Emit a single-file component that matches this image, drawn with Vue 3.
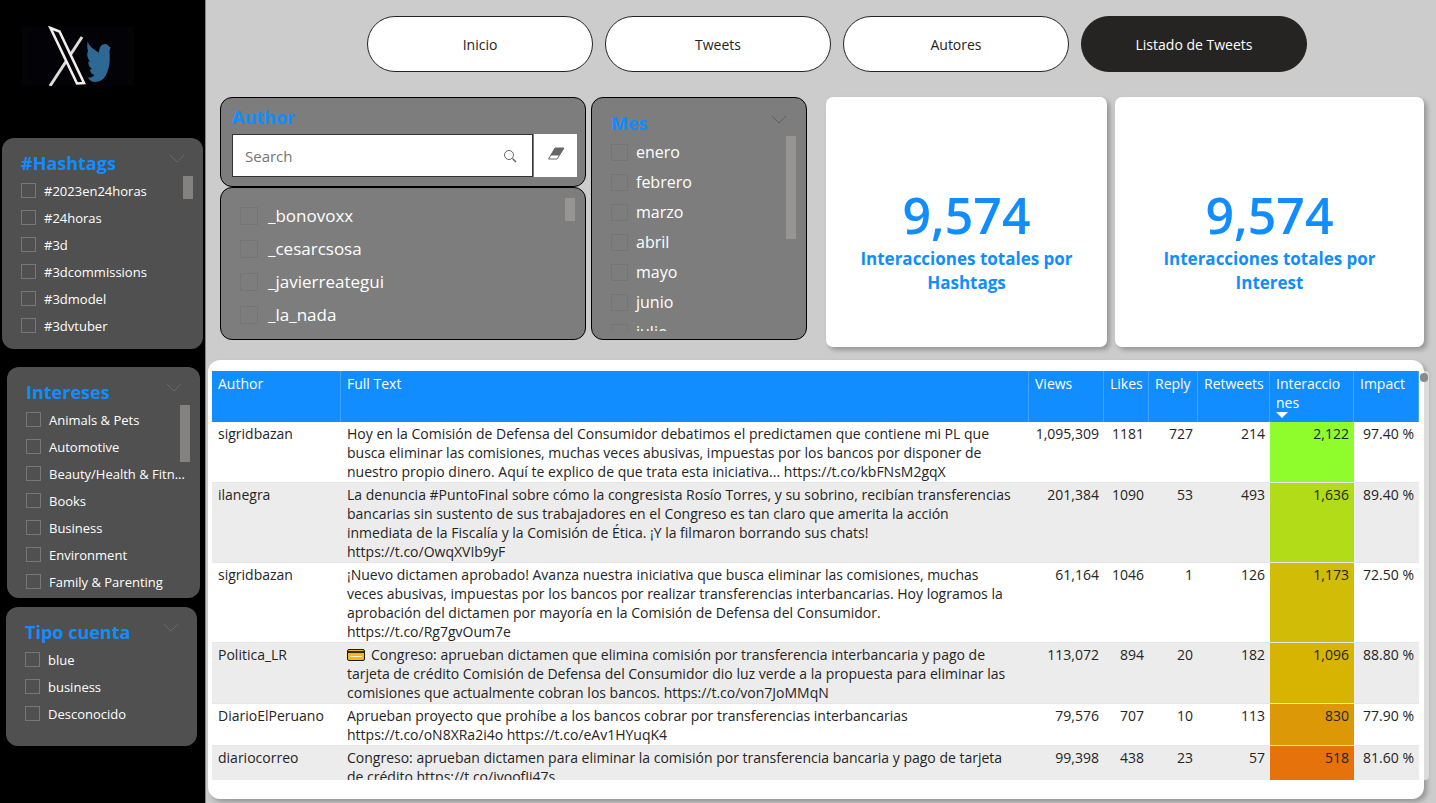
<script setup>
import { ref } from 'vue'

const tabs = ['Inicio', 'Tweets', 'Autores', 'Listado de Tweets']
const activeTab = ref('Listado de Tweets')
const search = ref('')

const sidePanels = [
  {
    id: 'hashtags',
    title: '#Hashtags',
    thumb: 'short',
    items: ['#2023en24horas', '#24horas', '#3d', '#3dcommissions', '#3dmodel', '#3dvtuber'],
  },
  {
    id: 'intereses',
    title: 'Intereses',
    thumb: 'long',
    items: ['Animals & Pets', 'Automotive', 'Beauty/Health & Fitn...', 'Books', 'Business', 'Environment', 'Family & Parenting'],
  },
  { id: 'tipo', title: 'Tipo cuenta', thumb: '', items: ['blue', 'business', 'Desconocido'] },
]

const authors = ['_bonovoxx', '_cesarcsosa', '_javierreategui', '_la_nada']
const months = ['enero', 'febrero', 'marzo', 'abril', 'mayo', 'junio', 'julio']

const kpis = [
  { value: '9,574', label: 'Interacciones totales por Hashtags' },
  { value: '9,574', label: 'Interacciones totales por Interest' },
]

const rows = [
  {
    author: 'sigridbazan',
    text: 'Hoy en la Comisión de Defensa del Consumidor debatimos el predictamen que contiene mi PL que\nbusca eliminar las comisiones, muchas veces abusivas, impuestas por los bancos por disponer de\nnuestro propio dinero. Aquí te explico de que trata esta iniciativa... https://t.co/kbFNsM2gqX',
    views: '1,095,309', likes: '1181', reply: '727', retweets: '214', inter: '2,122', impact: '97.40 %', color: '#8efd2b',
  },
  {
    author: 'ilanegra',
    text: 'La denuncia #PuntoFinal sobre cómo la congresista Rosío Torres, y su sobrino, recibían transferencias\nbancarias sin sustento de sus trabajadores en el Congreso es tan claro que amerita la acción\ninmediata de la Fiscalía y la Comisión de Ética. ¡Y la filmaron borrando sus chats!\nhttps://t.co/OwqXVIb9yF',
    views: '201,384', likes: '1090', reply: '53', retweets: '493', inter: '1,636', impact: '89.40 %', color: '#b1dc17',
  },
  {
    author: 'sigridbazan',
    text: '¡Nuevo dictamen aprobado! Avanza nuestra iniciativa que busca eliminar las comisiones, muchas\nveces abusivas, impuestas por los bancos por realizar transferencias interbancarias. Hoy logramos la\naprobación del dictamen por mayoría en la Comisión de Defensa del Consumidor.\nhttps://t.co/Rg7gvOum7e',
    views: '61,164', likes: '1046', reply: '1', retweets: '126', inter: '1,173', impact: '72.50 %', color: '#d1bc07',
  },
  {
    author: 'Politica_LR',
    card: true,
    text: 'Congreso: aprueban dictamen que elimina comisión por transferencia interbancaria y pago de\ntarjeta de crédito Comisión de Defensa del Consumidor dio luz verde a la propuesta para eliminar las\ncomisiones que actualmente cobran los bancos. https://t.co/von7JoMMqN',
    views: '113,072', likes: '894', reply: '20', retweets: '182', inter: '1,096', impact: '88.80 %', color: '#d7b402',
  },
  {
    author: 'DiarioElPeruano',
    text: 'Aprueban proyecto que prohíbe a los bancos cobrar por transferencias interbancarias\nhttps://t.co/oN8XRa2i4o https://t.co/eAv1HYuqK4',
    views: '79,576', likes: '707', reply: '10', retweets: '113', inter: '830', impact: '77.90 %', color: '#dc9807',
  },
  {
    author: 'diariocorreo',
    text: 'Congreso: aprueban dictamen para eliminar la comisión por transferencia bancaria y pago de tarjeta\nde crédito https://t.co/jvoofJj47s',
    views: '99,398', likes: '438', reply: '23', retweets: '57', inter: '518', impact: '81.60 %', color: '#e6720c',
  },
]
</script>

<template>
  <div class="report">
    <aside class="sidebar">
      <svg class="logo" viewBox="0 0 112 60" aria-label="X y Twitter" role="img">
        <rect width="112" height="60" fill="#040404" />
        <rect x="4" width="101" height="60" fill="#020207" />
        <path d="M28 60 L60 11" stroke="#dedcd8" stroke-width="3" />
        <path d="M28.500 2 L37.500 5.500 L62 57 L55 57.500 Z" fill="#030308" stroke="#f3eeec" stroke-width="2.600" />
        <path d="M65.700 15.500 C67 20 72 24 77 26.500 C77 22 79 18 83 18 C85 18 86 19 87 20.500 L88.500 21.500 L87.500 25 C88 32 88 39 86 44 C84 52 79 56 73 56 C70 56 67 54 66 51.500 C69 51.500 71 51 72.500 49 C70 48.500 68 46.500 68 43.500 L70 43 C67 41 66 38 66.500 35 L68.500 36 C65 32 64.500 28 66 25 C65 22 65 18 65.700 15.500Z" fill="#2e6894" />
      </svg>

      <section v-for="p in sidePanels" :key="p.id" class="side-panel" :class="p.id">
        <header class="panel-head">
          <h2>{{ p.title }}</h2>
          <svg class="chevron" viewBox="0 0 16 9" aria-hidden="true"><path d="M1 1 L8 8 L15 1" /></svg>
        </header>
        <div class="options">
          <label v-for="i in p.items" :key="i"><input type="checkbox" /><span>{{ i }}</span></label>
        </div>
        <span v-if="p.thumb" class="thumb" :class="p.thumb"></span>
      </section>
    </aside>

    <main>
      <nav>
        <button v-for="t in tabs" :key="t" type="button" :class="{ active: t === activeTab }" @click="activeTab = t">{{ t }}</button>
      </nav>

      <div class="top">
        <div class="filters">
          <div class="author-col">
            <section class="gray-panel author-search">
              <h2><label for="author-search">Author</label></h2>
              <div class="search-row">
                <div class="search-box">
                  <input id="author-search" v-model="search" type="text" placeholder="Search" />
                  <svg viewBox="0 0 14 14" aria-hidden="true"><circle cx="6" cy="6" r="4.500" /><path d="M9.500 9.500 L13 13" stroke-width="1.500" /></svg>
                </div>
                <button type="button" aria-label="Borrar" @click="search = ''">
                  <svg viewBox="0 0 18 14" aria-hidden="true">
                    <path d="M8 1 H17 L10 12 H1.500 Z" fill="#fff" stroke="#666" />
                    <path d="M8 1 H17 L12.500 8.500 H3.500 Z" fill="#666" />
                  </svg>
                </button>
              </div>
            </section>
            <section class="gray-panel author-list">
              <div class="options">
                <label v-for="a in authors" :key="a"><input type="checkbox" /><span>{{ a }}</span></label>
              </div>
              <span class="thumb"></span>
            </section>
          </div>
          <section class="gray-panel month">
            <header class="panel-head">
              <h2>Mes</h2>
              <svg class="chevron" viewBox="0 0 16 9" aria-hidden="true"><path d="M1 1 L8 8 L15 1" /></svg>
            </header>
            <div class="options">
              <label v-for="m in months" :key="m"><input type="checkbox" /><span>{{ m }}</span></label>
            </div>
            <span class="thumb"></span>
          </section>
        </div>
        <div class="kpis">
          <article v-for="k in kpis" :key="k.label">
            <strong>{{ k.value }}</strong>
            <p>{{ k.label }}</p>
          </article>
        </div>
      </div>

      <section class="table-panel">
        <div class="table-clip">
          <table>
            <colgroup>
              <col class="c-author" /><col /><col class="c-views" /><col class="c-likes" /><col class="c-reply" /><col class="c-rt" /><col class="c-inter" /><col class="c-impact" />
            </colgroup>
            <thead>
              <tr>
                <th>Author</th><th>Full Text</th><th>Views</th><th>Likes</th><th>Reply</th><th>Retweets</th>
                <th class="sorted">Interaccio<br />nes<svg viewBox="0 0 12 6" aria-hidden="true"><path d="M0 0 H12 L6 6 Z" /></svg></th>
                <th>Impact</th>
              </tr>
            </thead>
            <tbody>
              <tr v-for="r in rows" :key="r.inter">
                <td>{{ r.author }}</td>
                <td class="text"><svg v-if="r.card" class="card-icon" viewBox="0 0 18 12" role="img" aria-label="Tarjeta">
                  <rect x="0.500" y="0.500" width="17" height="11" rx="1.500" fill="#fbb513" stroke="#1d1a14" />
                  <rect x="1" y="2" width="16" height="2" fill="#33291a" />
                  <rect x="3" y="7" width="12" height="1" fill="#fff3cf" />
                </svg>{{ r.text }}</td>
                <td class="num">{{ r.views }}</td>
                <td class="num">{{ r.likes }}</td>
                <td class="num">{{ r.reply }}</td>
                <td class="num">{{ r.retweets }}</td>
                <td class="num heat" :style="{ backgroundColor: r.color }">{{ r.inter }}</td>
                <td class="num">{{ r.impact }}</td>
              </tr>
            </tbody>
          </table>
        </div>
        <span class="track"><span class="dot"></span></span>
      </section>
    </main>
  </div>
</template>

<style>
body {
  margin: 0;
  background: #ccc;
}
</style>

<style scoped>
.report {
  display: flex;
  height: 100vh;
  overflow: hidden;
  font-family: 'Open Sans', 'Noto Sans', sans-serif;
  font-size: 14px;
  color: #252423;
}
.report * {
  box-sizing: border-box;
}
h2 {
  margin: 0;
  font-size: 18px;
  line-height: 24px;
  font-weight: 700;
  color: #118dff;
}
button,
input {
  font: inherit;
}

/* sidebar */
.sidebar {
  flex: 0 0 206px;
  min-width: 0;
  background: #000;
  border-right: 1px solid #858585;
  display: flex;
  flex-direction: column;
}
.logo {
  width: 112px;
  height: 60px;
  margin: 26px 0 52px 22px;
}
.side-panel {
  position: relative;
  background: #505050;
  border-radius: 12px;
  padding: 13px 15px 10px 19px;
}
.hashtags {
  margin: 0 2px 18px;
}
.intereses {
  margin: 0 5px 9px 7px;
  padding-bottom: 3px;
}
.tipo {
  margin: 0 8px 0 6px;
  padding-bottom: 19px;
}
.panel-head {
  display: flex;
  justify-content: space-between;
  align-items: flex-start;
}
.side-panel .panel-head {
  padding-right: 3px;
}
.chevron {
  width: 16px;
  height: 9px;
  margin-top: 3px;
  fill: none;
  stroke: #686868;
}
.options {
  display: flex;
  flex-direction: column;
}
.side-panel .options {
  margin-top: 2px;
}
.options label {
  display: flex;
  align-items: center;
  flex-shrink: 0;
  gap: 8px;
  height: 27px;
  font-size: 13px;
  color: #fff;
  white-space: nowrap;
}
.options input {
  appearance: none;
  flex: none;
  margin: 0;
  width: 15px;
  height: 15px;
  border: 1px solid #777;
}
.options input:checked {
  background: #118dff;
}
.thumb {
  position: absolute;
  right: 10px;
  top: 38px;
  width: 10px;
  height: 23px;
  background: #848280;
}
.thumb.long {
  height: 57px;
}

/* main area */
main {
  flex: 1;
  min-width: 0;
  display: flex;
  flex-direction: column;
  padding: 16px 12px 4px 2px;
}
nav {
  display: flex;
  gap: 12px;
  padding: 0 117px 0 159px;
}
nav button {
  flex: 1;
  height: 56px;
  border: 1px solid #252423;
  border-radius: 28px;
  background: #fff;
  color: #252423;
}
nav button.active {
  background: #252423;
  color: #fff;
}
.top {
  display: grid;
  grid-template-columns: minmax(0, 587fr) minmax(0, 598fr);
  gap: 19px;
  height: 250px;
  margin: 25px 0 13px 12px;
}
.filters {
  display: grid;
  grid-template-columns: minmax(0, 366fr) minmax(0, 216fr);
  grid-template-rows: minmax(0, 1fr);
  gap: 5px;
  height: 243px;
}
.author-col {
  display: flex;
  flex-direction: column;
}
.gray-panel {
  position: relative;
  background: #7d7d7d;
  border: 1px solid #000;
  border-radius: 12px;
}
.author-search {
  height: 90px;
  padding: 7px 8px 8px 11px;
}
.search-row {
  display: flex;
  gap: 1px;
  height: 43px;
  margin-top: 5px;
}
.search-box {
  flex: 1;
  display: flex;
  align-items: center;
  background: #fff;
  border: 1px solid #333;
  padding-right: 15px;
}
.search-box input {
  flex: 1;
  min-width: 0;
  border: 0;
  outline: 0;
  background: none;
  padding: 0 12px;
  font-size: 15px;
}
.search-box input::placeholder {
  color: #757575;
}
.search-box svg {
  width: 14px;
  height: 14px;
  fill: none;
  stroke: #666;
}
.search-row button {
  width: 43px;
  border: 0;
  background: #fff;
  padding: 0;
}
.search-row button svg {
  width: 18px;
  height: 14px;
}
.author-list {
  flex: 1;
  padding: 11px 19px 8px;
}
.author-list label {
  height: 33px;
  gap: 10px;
  font-size: 17px;
}
.gray-panel .options input {
  width: 18px;
  height: 18px;
  border-color: #757575;
}
.gray-panel .thumb {
  background: #979593;
  top: 10px;
}
.month {
  padding: 13px 19px 8px;
  display: flex;
  flex-direction: column;
}
.month .options {
  flex: 1;
  min-height: 0;
  margin-top: 2px;
  overflow: hidden;
}
.month .options label {
  height: 30px;
  gap: 8px;
  font-size: 16px;
}
.month .options input {
  width: 17px;
  height: 17px;
}
.month .chevron {
  stroke: #5f5f5f;
  margin-top: 4px;
}
.month .thumb {
  top: 38px;
  height: 103px;
}
.kpis {
  display: grid;
  grid-template-columns: minmax(0, 281fr) minmax(0, 309fr);
  gap: 8px;
}
.kpis article {
  background: #fff;
  border-radius: 7px;
  box-shadow: 3px 3px 5px #0004;
  padding: 88px 30px 0;
  text-align: center;
  color: #118dff;
}
.kpis strong {
  display: block;
  font-size: 50px;
  line-height: 60px;
  font-weight: 600;
}
.kpis p {
  margin: 2px 0 0;
  font-size: 17px;
  line-height: 24px;
  font-weight: 700;
}

/* table */
.table-panel {
  position: relative;
  flex: 1;
  min-height: 0;
  display: flex;
  flex-direction: column;
  background: #fff;
  border-radius: 12px;
  box-shadow: 3px 3px 5px #0004;
  padding: 11px 5px 19px 4px;
}
.table-clip {
  flex: 1;
  min-height: 0;
  overflow: hidden;
}
table {
  width: 100%;
  table-layout: fixed;
  border-collapse: separate;
  border-spacing: 0;
  line-height: 19px;
}
.c-author { width: 129px; }
.c-views { width: 75px; }
.c-likes { width: 45px; }
.c-reply { width: 49px; }
.c-rt { width: 72px; }
.c-inter { width: 84px; }
.c-impact { width: 65px; }
th {
  position: relative;
  height: 51px;
  padding: 3px 6px;
  background: #118dff;
  color: #fff;
  font-weight: 400;
  text-align: left;
  vertical-align: top;
  white-space: nowrap;
  border-right: 1px solid #41a4ff;
}
th svg {
  position: absolute;
  left: 6px;
  bottom: 4px;
  width: 12px;
  height: 6px;
  fill: #fff;
}
td {
  padding: 2px 6px 1px;
  vertical-align: top;
  border-bottom: 1px solid #e6e6e6;
  white-space: nowrap;
}
tbody tr:nth-child(even) {
  background: #ececec;
}
td.text {
  white-space: pre-line;
}
.num {
  padding-left: 0;
  padding-right: 5px;
  text-align: right;
}
.card-icon {
  width: 18px;
  height: 12px;
  margin-right: 6px;
  vertical-align: -1px;
}
.track {
  position: absolute;
  right: -5px;
  top: 11px;
  bottom: 19px;
  width: 5px;
  background: #dcdcdc;
  border-radius: 0 4px 4px 0;
}
.dot {
  position: absolute;
  top: 2px;
  right: 1px;
  width: 8px;
  height: 9px;
  border-radius: 4px;
  background: #8a8a8a;
}
</style>
